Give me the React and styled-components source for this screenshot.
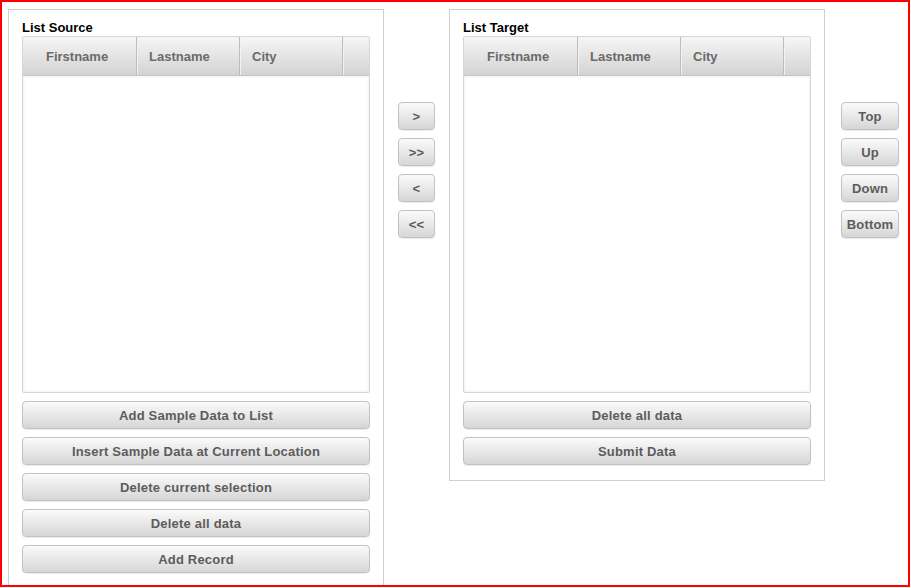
import React from "react"
import styled, { createGlobalStyle } from "styled-components"

const GlobalStyle = createGlobalStyle`
    * { box-sizing: border-box; }
    body {
        margin: 0;
        background: #ffffff;
        font-family: "Liberation Sans", Arial, sans-serif;
    }
`

const columns = [
    { label: "Firstname", width: 114, pad: 23 },
    { label: "Lastname", width: 103, pad: 12 },
    { label: "City", width: 103, pad: 12 },
]

function Grid() {
    return (
        <GridBox>
            <Header>
                {columns.map((c) => (
                    <HeadCell key={c.label} $width={c.width} $pad={c.pad}>{c.label}</HeadCell>
                ))}
                <HeadFill />
            </Header>
            <GridBody />
        </GridBox>
    )
}

export default function App() {
    return (
        <Frame>
            <GlobalStyle />
            <Panel $open>
                <Title>List Source</Title>
                <Grid />
                <WideButton>Add Sample Data to List</WideButton>
                <WideButton>Insert Sample Data at Current Location</WideButton>
                <WideButton>Delete current selection</WideButton>
                <WideButton>Delete all data</WideButton>
                <WideButton>Add Record</WideButton>
            </Panel>
            <SideButtons $left={14} $right={14}>
                <SmallButton $width={37}>&gt;</SmallButton>
                <SmallButton $width={37}>&gt;&gt;</SmallButton>
                <SmallButton $width={37}>&lt;</SmallButton>
                <SmallButton $width={37}>&lt;&lt;</SmallButton>
            </SideButtons>
            <Panel>
                <Title>List Target</Title>
                <Grid />
                <WideButton>Delete all data</WideButton>
                <WideButton>Submit Data</WideButton>
            </Panel>
            <SideButtons $left={16} $right={0}>
                <SmallButton $width={58}>Top</SmallButton>
                <SmallButton $width={58}>Up</SmallButton>
                <SmallButton $width={58}>Down</SmallButton>
                <SmallButton $width={58}>Bottom</SmallButton>
            </SideButtons>
        </Frame>
    )
}

const Frame = styled.div`
    width: 910px;
    height: 587px;
    border: 2px solid #ff0000;
    padding: 7px 0 0 6px;
    display: flex;
    align-items: flex-start;
    overflow: hidden;
`
const Panel = styled.section`
    width: 376px;
    flex-shrink: 0;
    border: 1px solid #cfcfcf;
    border-bottom: ${(p) => (p.$open ? "none" : "1px solid #cfcfcf")};
    padding: 9px 13px ${(p) => (p.$open ? "20px" : "15px")};
    display: flex;
    flex-direction: column;
    gap: 8px;
    background: #ffffff;
`
const Title = styled.h3`
    margin: 0 0 -8px;
    font-size: 13px;
    line-height: 17px;
    font-weight: 700;
    color: #000000;
`
const GridBox = styled.div`
    height: 357px;
    border: 1px solid #d6d6d6;
    border-radius: 2px;
    display: flex;
    flex-direction: column;
    overflow: hidden;
    box-shadow: inset 0 0 3px rgba(0, 0, 0, 0.12);
`
const Header = styled.div`
    display: flex;
    height: 39px;
    flex-shrink: 0;
    background: linear-gradient(#f6f6f6, #d3d3d3);
    border-bottom: 1px solid #c4c4c4;
`
const HeadCell = styled.div`
    width: ${(p) => p.$width}px;
    flex-shrink: 0;
    padding-left: ${(p) => p.$pad}px;
    display: flex;
    align-items: center;
    font-size: 13px;
    font-weight: 700;
    color: #6a6a6a;
    border-right: 1px solid #bdbdbd;
    box-shadow: 1px 0 0 #f2f2f2;
`
const HeadFill = styled.div`
    flex: 1;
`
const GridBody = styled.div`
    flex: 1;
    background: #ffffff;
    box-shadow: inset 0 0 3px rgba(0, 0, 0, 0.1);
`
const ButtonBase = styled.button`
    height: 28px;
    padding: 0;
    border: 1px solid #c2c2c2;
    border-radius: 4px;
    background: linear-gradient(#fbfbfb, #d6d6d6);
    box-shadow: 0 1px 1px rgba(0, 0, 0, 0.08);
    font-family: "Liberation Sans", Arial, sans-serif;
    font-size: 13px;
    font-weight: 700;
    letter-spacing: 0.2px;
    color: #5c5c5c;
    cursor: pointer;
`
const WideButton = styled(ButtonBase)`
    width: 100%;
`
const SmallButton = styled(ButtonBase)`
    width: ${(p) => p.$width}px;
`
const SideButtons = styled.div`
    display: flex;
    flex-direction: column;
    gap: 8px;
    margin: 93px ${(p) => p.$right}px 0 ${(p) => p.$left}px;
    flex-shrink: 0;
`
